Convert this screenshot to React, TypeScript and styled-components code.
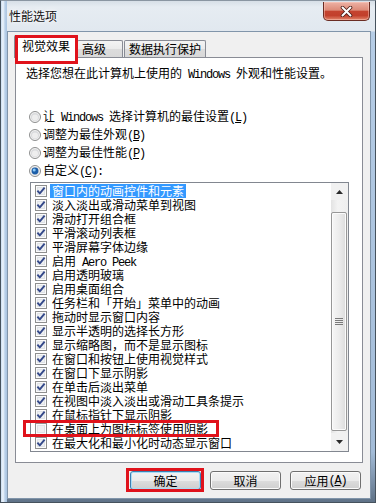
import React from "react";
import styled, { createGlobalStyle } from "styled-components";

interface Effect {
  label: React.ReactNode;
  checked: boolean;
  selected?: boolean;
  marked?: boolean;
}

const GlobalStyle = createGlobalStyle`
  html, body {
    margin: 0;
    padding: 0;
    background: #ffffff;
  }
  body {
    font-family: "Noto Sans CJK SC", "Liberation Sans", sans-serif;
    font-size: 12px;
    color: #000;
  }
  * {
    box-sizing: border-box;
  }
`;

const Latin = styled.span`
  font-family: "Liberation Mono", monospace;
  font-size: 12px;
  letter-spacing: -1.2px;
  white-space: pre;
`;

const effects: Effect[] = [
  { label: "窗口内的动画控件和元素", checked: true, selected: true },
  { label: "淡入淡出或滑动菜单到视图", checked: true },
  { label: "滑动打开组合框", checked: true },
  { label: "平滑滚动列表框", checked: true },
  { label: "平滑屏幕字体边缘", checked: true },
  {
    label: (
      <>
        启用<Latin> Aero Peek</Latin>
      </>
    ),
    checked: true,
  },
  { label: "启用透明玻璃", checked: true },
  { label: "启用桌面组合", checked: true },
  { label: "任务栏和「开始」菜单中的动画", checked: true },
  { label: "拖动时显示窗口内容", checked: true },
  { label: "显示半透明的选择长方形", checked: true },
  { label: "显示缩略图，而不是显示图标", checked: true },
  { label: "在窗口和按钮上使用视觉样式", checked: true },
  { label: "在窗口下显示阴影", checked: true },
  { label: "在单击后淡出菜单", checked: true },
  { label: "在视图中淡入淡出或滑动工具条提示", checked: true },
  { label: "在鼠标指针下显示阴影", checked: true },
  { label: "在桌面上为图标标签使用阴影", checked: false, marked: true },
  { label: "在最大化和最小化时动态显示窗口", checked: true },
];

const CheckBox: React.FC<{ checked: boolean }> = ({ checked }) => (
  <svg width="12" height="12" viewBox="0 0 12 12" style={{ flex: "none" }}>
    <rect x="0.5" y="0.5" width="11" height="11" fill="#fbfbfb" stroke="#8e8f8f" />
    <rect x="2" y="2" width="8" height="8" fill="#dfe2e6" />
    <rect x="3" y="3" width="6" height="6" fill="#eef0f2" />
    {checked && (
      <path
        d="M2.4 5.6 L4.8 8.4 L9.6 2.6"
        fill="none"
        stroke="#34498a"
        strokeWidth="1.9"
        strokeLinejoin="round"
      />
    )}
  </svg>
);

const Radio: React.FC<{ on?: boolean }> = ({ on }) => (
  <svg width="12" height="12" viewBox="0 0 12 12" style={{ flex: "none" }}>
    <circle cx="6" cy="6" r="5.5" fill="#f3f3f3" stroke="#8e8f8f" />
    <circle cx="6" cy="6" r="4" fill="#d9dadc" />
    <circle cx="6" cy="6.5" r="3" fill="#eeeeee" />
    {on && (
      <>
        <circle cx="6" cy="6" r="3.4" fill="#1d5ea8" />
        <circle cx="5.2" cy="5" r="1.5" fill="#8ccaf7" />
      </>
    )}
  </svg>
);

const ArrowIcon: React.FC<{ down?: boolean }> = ({ down }) => (
  <svg width="7" height="4" viewBox="0 0 7 4">
    <path d={down ? "M0 0 H7 L3.5 4 Z" : "M0 4 H7 L3.5 0 Z"} fill="#2b2b2b" />
  </svg>
);

const GripIcon: React.FC = () => (
  <svg width="8" height="7" viewBox="0 0 8 7">
    <path d="M0 0.5 H8 M0 2.5 H8 M0 4.5 H8 M0 6.5 H8" stroke="#7a7a7a" strokeWidth="1" />
  </svg>
);

const CloseGlyph: React.FC = () => (
  <svg width="13" height="11" viewBox="0 0 13 11">
    <path d="M2.5 1.5 L10.5 9.5 M10.5 1.5 L2.5 9.5" stroke="#4a1c16" strokeWidth="3.6" strokeLinecap="round" />
    <path d="M2.5 1.5 L10.5 9.5 M10.5 1.5 L2.5 9.5" stroke="#ffffff" strokeWidth="2" strokeLinecap="round" />
  </svg>
);

const App: React.FC = () => {
  return (
    <>
      <GlobalStyle />
      <Window>
        <TitleBar>
          <Title>性能选项</Title>
          <CloseButton>
            <CloseGlyph />
          </CloseButton>
        </TitleBar>
        <Client>
          <TabStrip>
            <Tab $active $width={64} $pad={7} $shift={-1}>
              视觉效果
              <Mark $t={-1} $r={-1} $b={-6} $l={0} />
            </Tab>
            <Tab $width={46} $pad={4} $shift={-1}>
              高级
            </Tab>
            <Tab $width={82} $pad={4} $shift={1}>
              数据执行保护
            </Tab>
          </TabStrip>
          <Panel>
            <Description>
              选择您想在此计算机上使用的<Latin> Windows </Latin>外观和性能设置。
            </Description>
            <RadioGroup>
              <RadioRow>
                <Radio />
                <span>
                  让<Latin> Windows </Latin>选择计算机的最佳设置
                  <Latin>
                    (<u>L</u>)
                  </Latin>
                </span>
              </RadioRow>
              <RadioRow>
                <Radio />
                <span>
                  调整为最佳外观
                  <Latin>
                    (<u>B</u>)
                  </Latin>
                </span>
              </RadioRow>
              <RadioRow>
                <Radio />
                <span>
                  调整为最佳性能
                  <Latin>
                    (<u>P</u>)
                  </Latin>
                </span>
              </RadioRow>
              <RadioRow>
                <Radio on />
                <span>
                  自定义
                  <Latin>
                    (<u>C</u>):
                  </Latin>
                </span>
              </RadioRow>
            </RadioGroup>
            <ListBox>
              <Rows>
                {effects.map((effect, i) => (
                  <Row key={i}>
                    <CheckBox checked={effect.checked} />
                    <ItemLabel $selected={effect.selected}>{effect.label}</ItemLabel>
                    {effect.marked && <Mark $t={-2} $r={112} $b={-1} $l={-8} />}
                  </Row>
                ))}
              </Rows>
              <ScrollBar>
                <ScrollButton>
                  <ArrowIcon />
                </ScrollButton>
                <Thumb>
                  <GripIcon />
                </Thumb>
                <ScrollButton $down>
                  <ArrowIcon down />
                </ScrollButton>
              </ScrollBar>
            </ListBox>
          </Panel>
          <Buttons>
            <DialogButton $default>
              确定
              <Mark $t={-4} $r={-4} $b={-3} $l={-5} />
            </DialogButton>
            <DialogButton>取消</DialogButton>
            <DialogButton>
              应用
              <Latin>
                (<u>A</u>)
              </Latin>
            </DialogButton>
          </Buttons>
        </Client>
      </Window>
    </>
  );
};

export default App;

const Window = styled.div`
  width: 376px;
  height: 503px;
  display: flex;
  flex-direction: column;
  border: 1px solid #46525d;
  border-top-color: #8a96a2;
  padding: 0 4px 3px 6px;
  background:
    linear-gradient(90deg, #c9dcf0 0, #eef5fc 2px, #b9d0e9 4px, #a9c3df 6px, transparent 6px),
    linear-gradient(180deg, #d7dfe7 0, #e6ecf2 6px, #e1e8ef 30px, #b6cde6 31px, #a3bcd8 90%, #5f7287 100%);
`;

const TitleBar = styled.div`
  height: 30px;
  display: flex;
  justify-content: space-between;
  align-items: flex-start;
  padding: 0 1px 0 2px;
`;

const Title = styled.div`
  margin-top: 8px;
  line-height: 14px;
  font-size: 12px;
  color: #111;
  text-shadow: 0 0 6px #ffffff, 0 0 3px #ffffff;
`;

const CloseButton = styled.div`
  width: 47px;
  height: 19px;
  margin-top: 1px;
  display: flex;
  align-items: center;
  justify-content: center;
  border: 1px solid #6a2c23;
  border-top: none;
  border-radius: 0 0 5px 5px;
  background: linear-gradient(180deg, #edb2a5 0%, #dd8b79 45%, #c4432f 52%, #c2402c 75%, #e2866c 100%);
  box-shadow: inset 0 0 0 1px rgba(255, 210, 200, 0.45);
`;

const Client = styled.div`
  flex: 1;
  display: flex;
  flex-direction: column;
  border: 1px solid #8195aa;
  background: #f0f0f0;
  padding: 3px 7px 8px 7px;
`;

const TabStrip = styled.div`
  height: 22px;
  display: flex;
  align-items: flex-end;
`;

const Tab = styled.div<{ $active?: boolean; $width: number; $pad: number; $shift: number }>`
  position: relative;
  width: ${(p) => p.$width}px;
  height: ${(p) => (p.$active ? 23 : 17)}px;
  margin-left: ${(p) => p.$shift}px;
  margin-bottom: ${(p) => (p.$active ? -1 : 0)}px;
  padding: ${(p) => (p.$active ? 3 : 1)}px 0 0 ${(p) => p.$pad}px;
  line-height: 14px;
  white-space: nowrap;
  border: 1px solid #898c95;
  border-bottom: none;
  border-radius: 2px 2px 0 0;
  background: ${(p) =>
    p.$active ? "#ffffff" : "linear-gradient(180deg, #f4f4f4 0%, #ebebeb 50%, #dcdcdc 51%, #d8d8d8 100%)"};
  z-index: ${(p) => (p.$active ? 2 : 1)};
`;

const Mark = styled.span<{ $t: number; $r: number; $b: number; $l: number }>`
  position: absolute;
  top: ${(p) => p.$t}px;
  right: ${(p) => p.$r}px;
  bottom: ${(p) => p.$b}px;
  left: ${(p) => p.$l}px;
  border: 3px solid #e0121b;
  pointer-events: none;
  z-index: 3;
`;

const Panel = styled.div`
  flex: 1;
  display: flex;
  flex-direction: column;
  border: 1px solid #898c95;
  background: #ffffff;
`;

const Description = styled.div`
  margin: 8px 0 0 10px;
  line-height: 14px;
  white-space: nowrap;
`;

const RadioGroup = styled.div`
  margin-top: 26px;
  padding-left: 13px;
  display: flex;
  flex-direction: column;
`;

const RadioRow = styled.div`
  height: 18px;
  display: flex;
  align-items: center;
  gap: 2px;
  line-height: 14px;
  white-space: nowrap;
`;

const ListBox = styled.div`
  margin: 2px 0 0 14px;
  width: 319px;
  height: 270px;
  display: flex;
  border: 1px solid #828790;
  background: #ffffff;
`;

const Rows = styled.div`
  flex: 1;
  padding-top: 1px;
  display: flex;
  flex-direction: column;
`;

const Row = styled.div`
  position: relative;
  height: 14px;
  display: flex;
  align-items: center;
  padding-left: 4px;
`;

const ItemLabel = styled.span<{ $selected?: boolean }>`
  margin-left: 3px;
  padding: 0 2px;
  height: 14px;
  line-height: 14px;
  white-space: nowrap;
  background: ${(p) => (p.$selected ? "#3399ff" : "transparent")};
  color: ${(p) => (p.$selected ? "#ffffff" : "#000000")};
`;

const ScrollBar = styled.div`
  width: 17px;
  display: flex;
  flex-direction: column;
  background: linear-gradient(90deg, #e3e3e3 0%, #f3f3f3 40%, #eeeeee 100%);
`;

const ScrollButton = styled.div<{ $down?: boolean }>`
  height: ${(p) => (p.$down ? 18 : 17)}px;
  margin-bottom: ${(p) => (p.$down ? 0 : 12)}px;
  margin-top: ${(p) => (p.$down ? 2 : 0)}px;
  display: flex;
  align-items: center;
  justify-content: center;
  background: #f1f1f1;
`;

const Thumb = styled.div`
  flex: 1;
  margin: 0 1px 0 0;
  display: flex;
  align-items: center;
  justify-content: center;
  border: 1px solid #979797;
  border-radius: 2px;
  background: linear-gradient(90deg, #f6f6f6 0%, #ececec 50%, #dcdcdc 100%);
  box-shadow: inset 0 0 0 1px #fbfbfb;
`;

const Buttons = styled.div`
  margin-top: 8px;
  padding-right: 2px;
  display: flex;
  justify-content: flex-end;
  gap: 9px;
`;

const DialogButton = styled.div<{ $default?: boolean }>`
  position: relative;
  width: 71px;
  height: 19px;
  display: flex;
  align-items: center;
  justify-content: center;
  line-height: 14px;
  border: 1px solid ${(p) => (p.$default ? "#3c7fb1" : "#707070")};
  border-radius: 3px;
  background: linear-gradient(180deg, #f2f2f2 0%, #ebebeb 50%, #dddddd 51%, #cfcfcf 100%);
  box-shadow: inset 0 0 0 1px ${(p) => (p.$default ? "#a9dcf6" : "#fbfbfb")};
`;
